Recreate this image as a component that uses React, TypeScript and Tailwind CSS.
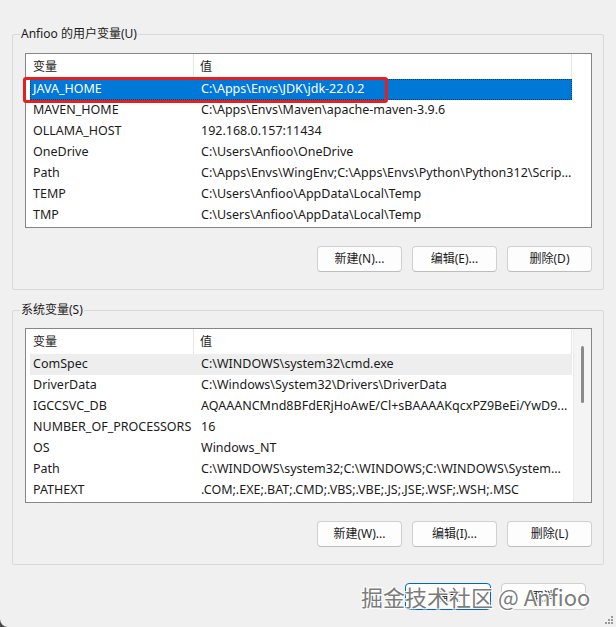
import React from "react";

type Row = [string, string];

const userVars: Row[] = [
  ["JAVA_HOME", "C:\\Apps\\Envs\\JDK\\jdk-22.0.2"],
  ["MAVEN_HOME", "C:\\Apps\\Envs\\Maven\\apache-maven-3.9.6"],
  ["OLLAMA_HOST", "192.168.0.157:11434"],
  ["OneDrive", "C:\\Users\\Anfioo\\OneDrive"],
  ["Path", "C:\\Apps\\Envs\\WingEnv;C:\\Apps\\Envs\\Python\\Python312\\Scrip..."],
  ["TEMP", "C:\\Users\\Anfioo\\AppData\\Local\\Temp"],
  ["TMP", "C:\\Users\\Anfioo\\AppData\\Local\\Temp"],
];

const sysVars: Row[] = [
  ["ComSpec", "C:\\WINDOWS\\system32\\cmd.exe"],
  ["DriverData", "C:\\Windows\\System32\\Drivers\\DriverData"],
  ["IGCCSVC_DB", "AQAAANCMnd8BFdERjHoAwE/Cl+sBAAAAKqcxPZ9BeEi/YwD9..."],
  ["NUMBER_OF_PROCESSORS", "16"],
  ["OS", "Windows_NT"],
  ["Path", "C:\\WINDOWS\\system32;C:\\WINDOWS;C:\\WINDOWS\\System..."],
  ["PATHEXT", ".COM;.EXE;.BAT;.CMD;.VBS;.VBE;.JS;.JSE;.WSF;.WSH;.MSC"],
];

function Header() {
  return (
    <div className="flex h-[25px] ml-[4px] w-[542px] items-center text-[#1b1b1b]">
      <div className="w-[164px] h-full flex items-center pl-[3px] border-r border-[#e5e5e5]">变量</div>
      <div className="flex-1 h-full flex items-center pl-[6px] border-r border-[#e5e5e5]">值</div>
    </div>
  );
}

function ListRow({ row, state }: { row: Row; state: "selected" | "hover" | "none" }) {
  const cls =
    state === "selected"
      ? "bg-[#0078d7] text-white outline outline-1 outline-dotted outline-[#0b3f6e] -outline-offset-1"
      : state === "hover"
      ? "bg-[#eeeeee] text-[#1b1b1b]"
      : "text-[#1b1b1b]";
  return (
    <div className={`flex h-[21px] ml-[4px] w-[542px] items-center whitespace-nowrap text-[12.5px] ${cls}`}>
      <div className="w-[164px] pl-[3px] overflow-hidden">{row[0]}</div>
      <div className="flex-1 pl-[7px] overflow-hidden">{row[1]}</div>
    </div>
  );
}

function Button({ label }: { label: string }) {
  return (
    <div className="w-[85px] h-[26px] flex items-center justify-center rounded-[4px] bg-[#fdfdfd] text-[#1b1b1b] border border-[#d0d0d0] border-b-[#bdbdbd]">
      {label}
    </div>
  );
}

function Group({
  title,
  rows,
  state,
  buttons,
  scroll,
  highlight,
  topPad,
}: {
  title: string;
  rows: Row[];
  state: ("selected" | "hover" | "none")[];
  buttons: string[];
  scroll?: boolean;
  highlight?: boolean;
  topPad: string;
}) {
  return (
    <fieldset className="w-[592px] border border-[#d9d9d9] rounded-[2px] p-0 m-0">
      <legend className="ml-[7px] px-[1px] h-[16px] leading-[16px] text-[#1b1b1b]">{title}</legend>
      <div className={`pl-[12px] pr-[11px] pb-[17px] ${topPad}`}>
        <div className="relative w-[567px] h-[175px] border border-[#868686] bg-white flex">
          <div className="flex-1 flex flex-col">
            <Header />
            {rows.map((r, i) => (
              <ListRow key={i} row={r} state={state[i]} />
            ))}
          </div>
          {scroll && (
            <div className="w-[18px] h-full bg-[#f4f4f4] border-l border-[#ebebeb] flex justify-center pt-[17px]">
              <div className="w-[3px] h-[57px] rounded-full bg-[#8a8a8a]" />
            </div>
          )}
          {highlight && (
            <div className="absolute left-[-3px] top-[23px] w-[365px] h-[26px] border-[3px] border-[#e61e1e] rounded-[3px]" />
          )}
        </div>
        <div className="flex justify-end gap-[10px] mt-[18px]">
          {buttons.map((b) => (
            <Button key={b} label={b} />
          ))}
        </div>
      </div>
    </fieldset>
  );
}

export default function App() {
  return (
    <div
      className="relative w-[616px] h-[627px] bg-[#f0f0f0] overflow-hidden text-[12px]"
      style={{ fontFamily: '"Noto Sans", "Noto Sans CJK SC", sans-serif' }}
    >
      <div className="pl-[12px] pt-[26px] flex flex-col">
        <Group
          title="Anfioo 的用户变量(U)"
          rows={userVars}
          state={["selected", "none", "none", "none", "none", "none", "none"]}
          buttons={["新建(N)...", "编辑(E)...", "删除(D)"]}
          highlight
          topPad="pt-[11px]"
        />
        <div className="h-[12px]" />
        <Group
          title="系统变量(S)"
          rows={sysVars}
          state={["hover", "none", "none", "none", "none", "none", "none"]}
          buttons={["新建(W)...", "编辑(I)...", "删除(L)"]}
          scroll
          topPad="pt-[10px]"
        />
        <div className="flex justify-end gap-[10px] mt-[18px] pr-[18px] w-[592px]">
          <div className="w-[86px] h-[27px] flex items-center justify-center rounded-[4px] bg-[#fdfdfd] border border-[#0067c0] text-[#1b1b1b]">
            确定
          </div>
          <div className="w-[85px] h-[27px] flex items-center justify-center rounded-[4px] bg-[#fdfdfd] border border-[#d0d0d0] text-[#1b1b1b]">
            取消
          </div>
        </div>
      </div>

      <div
        className="absolute left-[361px] top-[581px] text-[22px] leading-[30px] text-[#7c7c7c] whitespace-nowrap [text-shadow:1px_1px_0_#ffffff,-1px_-1px_0_#ffffff,1px_-1px_0_#ffffff,-1px_1px_0_#ffffff]"
        style={{ fontFamily: '"Noto Sans CJK SC", "Noto Sans", sans-serif' }}
      >
        掘金技术社区 @ Anfioo
      </div>

      <svg className="absolute right-[2px] bottom-[2px]" width="10" height="10" viewBox="0 0 10 10">
        {[
          [8, 2],
          [5, 5],
          [8, 5],
          [2, 8],
          [5, 8],
          [8, 8],
        ].map(([x, y], i) => (
          <rect key={i} x={x - 1} y={y - 1} width="2" height="2" fill="#9a9a9a" />
        ))}
      </svg>

      <svg className="absolute left-0 bottom-0" width="8" height="8" viewBox="0 0 8 8">
        <path d="M0 0 A8 8 0 0 0 8 8 L0 8 Z" fill="#4a4a4a" />
      </svg>
    </div>
  );
}
